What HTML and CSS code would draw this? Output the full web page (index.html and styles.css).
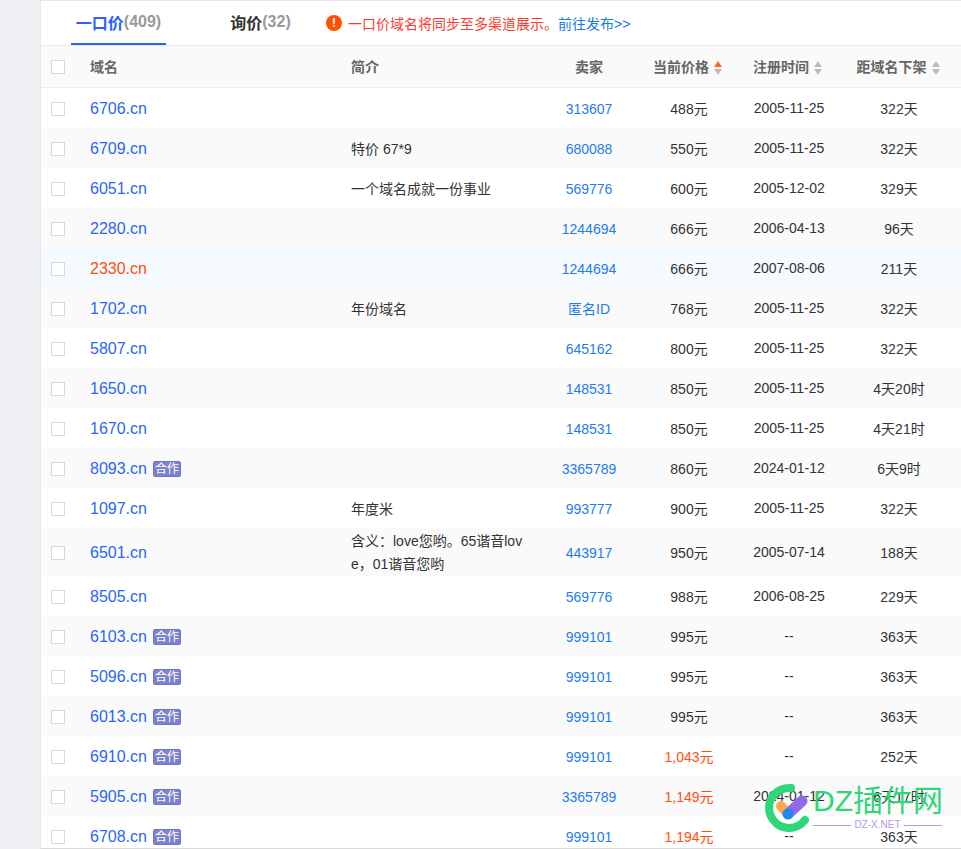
FILE: index.html
```html
<!DOCTYPE html>
<html lang="zh-CN">
<head>
  <meta charset="UTF-8">
  <meta name="viewport" content="width=device-width, initial-scale=1.0">
  <title>域名列表</title>
  <link rel="stylesheet" href="styles.css">
</head>
<body>
  <div class="sidebar"></div>

  <div class="main">
    <!-- Tabs -->
    <div class="tabs">
      <a class="tab tab-active">一口价<span class="tab-count">(409)</span></a>
      <a class="tab">询价<span class="tab-count">(32)</span></a>
      <div class="notice">
        <span class="notice-icon">!</span>
        <span class="notice-text">一口价域名将同步至多渠道展示。</span>
        <a class="notice-link">前往发布&gt;&gt;</a>
      </div>
    </div>

    <!-- Domain list -->
    <table class="table">
      <colgroup>
        <col class="col-check">
        <col class="col-domain">
        <col class="col-intro">
        <col class="col-seller">
        <col class="col-price">
        <col class="col-date">
        <col class="col-remain">
      </colgroup>
      <thead>
        <tr>
          <th class="head-check"><input class="check" type="checkbox"></th>
          <th class="left">域名</th>
          <th class="left">简介</th>
          <th>卖家</th>
          <th class="sortable">当前价格<span class="sort sort-up"></span></th>
          <th class="sortable">注册时间<span class="sort"></span></th>
          <th class="sortable remain">距域名下架<span class="sort"></span></th>
        </tr>
      </thead>
      <tbody>
        <tr><td><input class="check" type="checkbox"></td><td class="left"><a class="domain">6706.cn</a></td><td class="left intro"></td><td><a class="seller">313607</a></td><td>488元</td><td class="date">2005-11-25</td><td class="remain">322天</td></tr>
        <tr><td><input class="check" type="checkbox"></td><td class="left"><a class="domain">6709.cn</a></td><td class="left intro">特价 67*9</td><td><a class="seller">680088</a></td><td>550元</td><td class="date">2005-11-25</td><td class="remain">322天</td></tr>
        <tr><td><input class="check" type="checkbox"></td><td class="left"><a class="domain">6051.cn</a></td><td class="left intro">一个域名成就一份事业</td><td><a class="seller">569776</a></td><td>600元</td><td class="date">2005-12-02</td><td class="remain">329天</td></tr>
        <tr><td><input class="check" type="checkbox"></td><td class="left"><a class="domain">2280.cn</a></td><td class="left intro"></td><td><a class="seller">1244694</a></td><td>666元</td><td class="date">2006-04-13</td><td class="remain">96天</td></tr>
        <tr class="row-hover"><td><input class="check" type="checkbox"></td><td class="left"><a class="domain">2330.cn</a></td><td class="left intro"></td><td><a class="seller">1244694</a></td><td>666元</td><td class="date">2007-08-06</td><td class="remain">211天</td></tr>
        <tr><td><input class="check" type="checkbox"></td><td class="left"><a class="domain">1702.cn</a></td><td class="left intro">年份域名</td><td><a class="seller">匿名ID</a></td><td>768元</td><td class="date">2005-11-25</td><td class="remain">322天</td></tr>
        <tr><td><input class="check" type="checkbox"></td><td class="left"><a class="domain">5807.cn</a></td><td class="left intro"></td><td><a class="seller">645162</a></td><td>800元</td><td class="date">2005-11-25</td><td class="remain">322天</td></tr>
        <tr><td><input class="check" type="checkbox"></td><td class="left"><a class="domain">1650.cn</a></td><td class="left intro"></td><td><a class="seller">148531</a></td><td>850元</td><td class="date">2005-11-25</td><td class="remain">4天20时</td></tr>
        <tr><td><input class="check" type="checkbox"></td><td class="left"><a class="domain">1670.cn</a></td><td class="left intro"></td><td><a class="seller">148531</a></td><td>850元</td><td class="date">2005-11-25</td><td class="remain">4天21时</td></tr>
        <tr><td><input class="check" type="checkbox"></td><td class="left"><a class="domain">8093.cn</a><span class="badge">合作</span></td><td class="left intro"></td><td><a class="seller">3365789</a></td><td>860元</td><td class="date">2024-01-12</td><td class="remain">6天9时</td></tr>
        <tr><td><input class="check" type="checkbox"></td><td class="left"><a class="domain">1097.cn</a></td><td class="left intro">年度米</td><td><a class="seller">993777</a></td><td>900元</td><td class="date">2005-11-25</td><td class="remain">322天</td></tr>
        <tr><td><input class="check" type="checkbox"></td><td class="left"><a class="domain">6501.cn</a></td><td class="left intro">含义：love您哟。65谐音love，01谐音您哟</td><td><a class="seller">443917</a></td><td>950元</td><td class="date">2005-07-14</td><td class="remain">188天</td></tr>
        <tr><td><input class="check" type="checkbox"></td><td class="left"><a class="domain">8505.cn</a></td><td class="left intro"></td><td><a class="seller">569776</a></td><td>988元</td><td class="date">2006-08-25</td><td class="remain">229天</td></tr>
        <tr><td><input class="check" type="checkbox"></td><td class="left"><a class="domain">6103.cn</a><span class="badge">合作</span></td><td class="left intro"></td><td><a class="seller">999101</a></td><td>995元</td><td class="date">--</td><td class="remain">363天</td></tr>
        <tr><td><input class="check" type="checkbox"></td><td class="left"><a class="domain">5096.cn</a><span class="badge">合作</span></td><td class="left intro"></td><td><a class="seller">999101</a></td><td>995元</td><td class="date">--</td><td class="remain">363天</td></tr>
        <tr><td><input class="check" type="checkbox"></td><td class="left"><a class="domain">6013.cn</a><span class="badge">合作</span></td><td class="left intro"></td><td><a class="seller">999101</a></td><td>995元</td><td class="date">--</td><td class="remain">363天</td></tr>
        <tr><td><input class="check" type="checkbox"></td><td class="left"><a class="domain">6910.cn</a><span class="badge">合作</span></td><td class="left intro"></td><td><a class="seller">999101</a></td><td class="price-high">1,043元</td><td class="date">--</td><td class="remain">252天</td></tr>
        <tr><td><input class="check" type="checkbox"></td><td class="left"><a class="domain">5905.cn</a><span class="badge">合作</span></td><td class="left intro"></td><td><a class="seller">3365789</a></td><td class="price-high">1,149元</td><td class="date">2024-01-12</td><td class="remain">6天17时</td></tr>
        <tr><td><input class="check" type="checkbox"></td><td class="left"><a class="domain">6708.cn</a><span class="badge">合作</span></td><td class="left intro"></td><td><a class="seller">999101</a></td><td class="price-high">1,194元</td><td class="date">--</td><td class="remain">363天</td></tr>
      </tbody>
    </table>
  </div>

  <!-- Watermark over the table -->
  <div class="watermark">
    <svg class="watermark-logo" width="48" height="52" viewBox="0 0 48 52">
      <path d="M30 6 A20 20 0 1 0 44 38" fill="none" stroke="#2fd67a" stroke-width="8" stroke-linecap="round"/>
      <path d="M20 24 L27 32" fill="none" stroke="#ffa94d" stroke-width="10" stroke-linecap="round"/>
      <path d="M28 31 L41 19" fill="none" stroke="#8f6ae8" stroke-width="11" stroke-linecap="round"/>
      <circle cx="27" cy="32" r="5.5" fill="#1a8cf0"/>
    </svg>
    <div class="watermark-body">
      <div class="watermark-title">DZ插件网</div>
      <div class="watermark-sub"><span class="watermark-line"></span>DZ-X.NET<span class="watermark-line"></span></div>
    </div>
  </div>
</body>
</html>
```

FILE: styles.css
```css
/* Global Styles */
html, body {
  height: 100%;
}
body {
  display: flex;
  height: 849px;
  margin: 0;
  overflow: hidden;
  position: relative;
  font-family: "Liberation Sans", "Noto Sans CJK SC", sans-serif;
  font-size: 14px;
  color: #333;
  background-color: #fff;
}
.sidebar {
  width: 40px;
  flex-shrink: 0;
  background-color: #eef0f4;
}
.main {
  flex: 1;
  min-width: 0;
  overflow: hidden;
  border-left: 1px solid #e8e8e8;
  border-top: 1px solid #e8e8e8;
  border-bottom: 1px solid #d9d9d9;
}

/* Tabs */
.tabs {
  display: flex;
  align-items: center;
  height: 44px;
  padding-left: 30px;
  border-bottom: 1px solid #e8e8e8;
}
.tab {
  box-sizing: border-box;
  display: flex;
  align-items: center;
  justify-content: center;
  height: 44px;
  width: 95px;
  border-bottom: 2px solid transparent;
  font-size: 16px;
  font-weight: bold;
  color: #333;
}
.tab + .tab {
  margin-left: 64px;
  width: 61px;
}
.tab-active {
  color: #2962ff;
  border-bottom-color: #2962ff;
}
.tab-count {
  color: #999;
}
.notice {
  display: flex;
  align-items: center;
  margin-left: 35px;
}
.notice-icon {
  width: 16px;
  height: 16px;
  margin-right: 6px;
  border-radius: 50%;
  background-color: #ff5000;
  color: #fff;
  font-size: 12px;
  font-weight: bold;
  line-height: 16px;
  text-align: center;
}
.notice-text {
  color: #ff3b30;
}
.notice-link {
  color: #1a78e8;
}

/* Table Styles */
.table {
  width: 920px;
  table-layout: fixed;
  border-collapse: separate;
  border-spacing: 0;
}
.col-check { width: 49px; }
.col-domain { width: 261px; }
.col-intro { width: 188px; }
.col-seller { width: 100px; }
.col-price { width: 100px; }
.col-date { width: 100px; }
.col-remain { width: 122px; }

.table th {
  box-sizing: border-box;
  height: 42px;
  padding: 0 0 2px;
  background-color: #fafafa;
  border-bottom: 1px solid #ececec;
  color: #666;
  font-size: 14px;
  font-weight: bold;
  text-align: center;
  white-space: nowrap;
}
.table th.head-check {
  padding-bottom: 0;
}
.table th.sortable {
  padding-right: 3px;
}
.table th.remain {
  padding-right: 4px;
}
.table td {
  box-sizing: border-box;
  height: 40px;
  padding: 2px 0 0;
  line-height: 23px;
  text-align: center;
}
.table td.remain {
  padding-right: 2px;
}
.table tbody tr:nth-child(even) {
  background-color: #fafafa;
}
.table tbody tr.row-hover {
  background-color: #f5faff;
}
.table th.left, .table td.left {
  text-align: left;
}
.table td.intro {
  padding-right: 14px;
  word-break: break-all;
}
.table td.date {
  padding-bottom: 2px;
}
.table td.price-high {
  color: #ff4d0d;
}

.check {
  appearance: none;
  display: block;
  box-sizing: border-box;
  width: 14px;
  height: 14px;
  margin: 0 0 0 10px;
  background-color: #fff;
  border: 1px solid #d9d9d9;
}
.domain {
  font-size: 16px;
  color: #2b66f6;
}
.row-hover .domain {
  color: #ff4d0d;
}
.seller {
  color: #1f7cf0;
}
.badge {
  display: inline-block;
  box-sizing: border-box;
  width: 28px;
  height: 16px;
  margin-left: 6px;
  background-color: #7b82cf;
  border: 1px solid #6d75c9;
  border-radius: 2px;
  color: #fff;
  font-size: 12px;
  line-height: 14px;
  text-align: center;
  vertical-align: 1px;
}

/* Sort arrows */
.sort {
  display: inline-flex;
  flex-direction: column;
  gap: 2px;
  margin-left: 5px;
  vertical-align: middle;
}
.sort::before, .sort::after {
  content: "";
  width: 0;
  height: 0;
  border-left: 4.5px solid transparent;
  border-right: 4.5px solid transparent;
}
.sort::before {
  border-bottom: 6px solid #bdbbb6;
}
.sort::after {
  border-top: 6px solid #bdbbb6;
}
.sort-up::before {
  border-bottom-color: #ff6a13;
}

/* Watermark */
.watermark {
  position: absolute;
  left: 761px;
  top: 782px;
  display: flex;
  gap: 4px;
  pointer-events: none;
}
.watermark-body {
  width: 129px;
}
.watermark-title {
  color: #2fd67a;
  font-size: 30px;
  line-height: 38px;
  white-space: nowrap;
}
.watermark-sub {
  display: flex;
  align-items: center;
  gap: 3px;
  margin-top: -2px;
  color: #b497ea;
  font-size: 10px;
  line-height: 14px;
  white-space: nowrap;
}
.watermark-line {
  flex: 1;
  height: 1px;
  background-color: #b497ea;
}
```
